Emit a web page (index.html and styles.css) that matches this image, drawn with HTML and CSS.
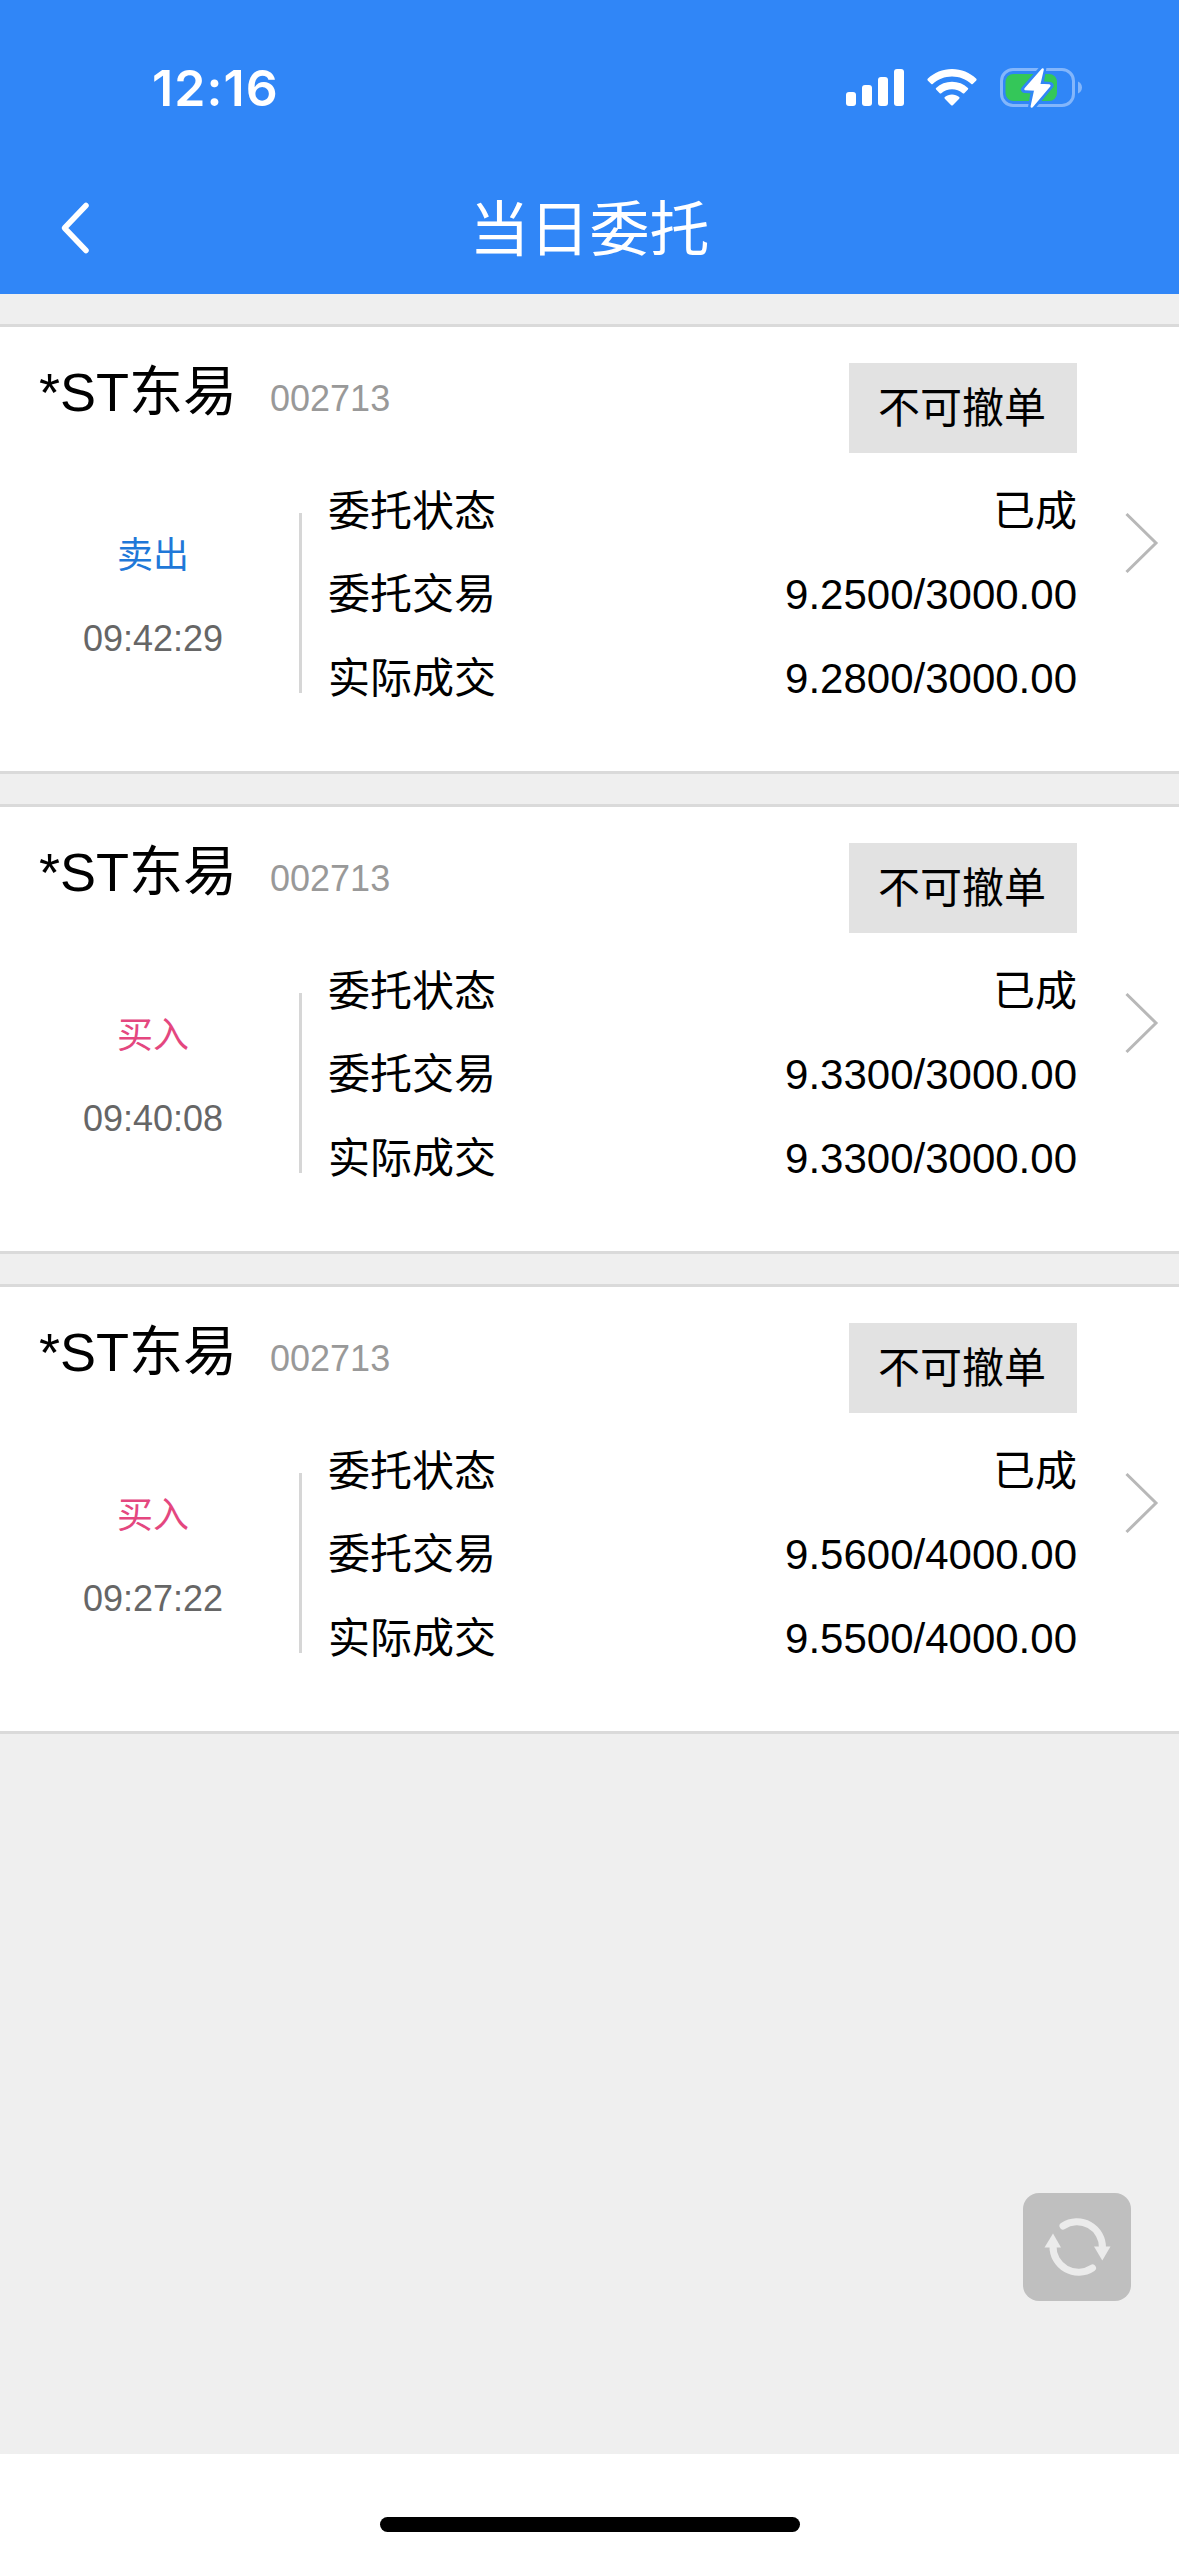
FILE: index.html
```html
<!DOCTYPE html>
<html lang="zh-CN">
<head>
<meta charset="utf-8">
<title>当日委托</title>
<link rel="stylesheet" href="styles.css">
</head>
<body>
<div class="app">
  <header class="top">
    <div class="status">
      <span class="clock">12:16</span>
      <div class="indicators">
        <svg width="58" height="40" viewBox="0 0 58 40" fill="#fff">
          <rect x="0" y="24" width="10" height="14" rx="3"/>
          <rect x="16" y="17" width="10" height="21" rx="3"/>
          <rect x="32" y="9" width="10" height="29" rx="3"/>
          <rect x="48" y="1" width="10" height="37" rx="3"/>
        </svg>
        <svg width="50" height="40" viewBox="0 0 50 40" fill="#fff">
          <path d="M25 1C34.300 1 43 4.600 49.300 10.800Q50 11.600 49.300 12.400L45.700 16Q45 16.600 44.300 16C39 11.200 32.200 8.500 25 8.500S11 11.200 5.700 16Q5 16.600 4.300 16L.7 12.400Q0 11.600.7 10.800C7 4.600 15.700 1 25 1Z"/>
          <path d="M25 13.800C31 13.800 36.600 16 40.900 20Q41.700 20.800 40.900 21.600L37.300 25.200Q36.500 25.900 35.700 25.200C32.700 22.600 29 21.300 25 21.300S17.300 22.600 14.300 25.200Q13.500 25.900 12.700 25.200L9.100 21.600Q8.300 20.800 9.100 20C13.400 16 19 13.800 25 13.800Z"/>
          <path d="M25 26.500C27.700 26.500 30.200 27.400 32.200 29.100Q33 29.900 32.200 30.700L25.800 37.200Q25 38 24.200 37.200L17.800 30.700Q17 29.900 17.800 29.100C19.800 27.400 22.300 26.500 25 26.500Z"/>
        </svg>
        <svg width="82" height="42" viewBox="0 0 82 42">
          <rect x="1.500" y="2.500" width="72" height="36" rx="11.500" fill="none" stroke="#83b6fb" stroke-width="3"/>
          <path d="M78 14.500C80.300 15.500 82 17.800 82 20.500S80.300 25.500 78 26.500Z" fill="#83b6fb"/>
          <rect x="5.500" y="7" width="51.500" height="27" rx="8" fill="#34c759"/>
          <path d="M42.800 1.500 24.500 22.500 34.500 23 31.500 40.500 50 18.500 39.800 17.500Z" fill="#3086f7" stroke="#3086f7" stroke-width="7" stroke-linejoin="round"/>
          <path d="M42.600 2.500 25.500 22 35.500 22.500 31.800 39.500 49.300 18.600 39 18Z" fill="#fff" stroke="#fff" stroke-width="2.500" stroke-linejoin="round"/>
        </svg>
      </div>
    </div>
    <nav class="nav">
      <svg class="back" width="32" height="56" viewBox="0 0 32 56" fill="none" stroke="#fff" stroke-width="5.500" stroke-linecap="round" stroke-linejoin="round"><path d="M26 5.500 4.500 28 26 50.500"/></svg>
      <h1 class="title">当日委托</h1>
    </nav>
  </header>

  <main class="orders">
    <article class="card">
      <div class="head">
        <div class="stock"><span class="name">*ST东易</span><span class="code">002713</span></div>
        <button class="cancel">不可撤单</button>
      </div>
      <div class="body">
        <div class="side"><span class="sell">卖出</span><span class="time">09:42:29</span></div>
        <dl class="rows">
          <div class="row"><dt>委托状态</dt><dd>已成</dd></div>
          <div class="row"><dt>委托交易</dt><dd>9.2500/3000.00</dd></div>
          <div class="row"><dt>实际成交</dt><dd>9.2800/3000.00</dd></div>
        </dl>
        <svg class="more" width="34" height="62" viewBox="0 0 34 62" fill="none" stroke="#b8b8b8" stroke-width="3"><path d="M1.500 2 31 31 1.500 60"/></svg>
      </div>
    </article>

    <article class="card">
      <div class="head">
        <div class="stock"><span class="name">*ST东易</span><span class="code">002713</span></div>
        <button class="cancel">不可撤单</button>
      </div>
      <div class="body">
        <div class="side"><span class="buy">买入</span><span class="time">09:40:08</span></div>
        <dl class="rows">
          <div class="row"><dt>委托状态</dt><dd>已成</dd></div>
          <div class="row"><dt>委托交易</dt><dd>9.3300/3000.00</dd></div>
          <div class="row"><dt>实际成交</dt><dd>9.3300/3000.00</dd></div>
        </dl>
        <svg class="more" width="34" height="62" viewBox="0 0 34 62" fill="none" stroke="#b8b8b8" stroke-width="3"><path d="M1.500 2 31 31 1.500 60"/></svg>
      </div>
    </article>

    <article class="card">
      <div class="head">
        <div class="stock"><span class="name">*ST东易</span><span class="code">002713</span></div>
        <button class="cancel">不可撤单</button>
      </div>
      <div class="body">
        <div class="side"><span class="buy">买入</span><span class="time">09:27:22</span></div>
        <dl class="rows">
          <div class="row"><dt>委托状态</dt><dd>已成</dd></div>
          <div class="row"><dt>委托交易</dt><dd>9.5600/4000.00</dd></div>
          <div class="row"><dt>实际成交</dt><dd>9.5500/4000.00</dd></div>
        </dl>
        <svg class="more" width="34" height="62" viewBox="0 0 34 62" fill="none" stroke="#b8b8b8" stroke-width="3"><path d="M1.500 2 31 31 1.500 60"/></svg>
      </div>
    </article>
  </main>

  <button class="refresh" aria-label="刷新">
    <svg width="108" height="108" viewBox="0 0 108 108">
      <g fill="none" stroke="#ebebeb" stroke-width="7" stroke-linecap="round">
        <path d="M40 33A25.500 25.500 0 0 1 79.500 55"/>
        <path d="M69.500 75A25.500 25.500 0 0 1 30 53"/>
      </g>
      <path d="M71 53.500H87.500L79.300 67.500Z" fill="#ebebeb"/>
      <path d="M21.500 54.500H38L30 40.500Z" fill="#ebebeb"/>
    </svg>
  </button>

  <footer class="bottom"><div class="home-bar"></div></footer>
</div>
</body>
</html>
```
FILE: styles.css
```css
* {
  box-sizing: border-box;
  margin: 0;
  padding: 0;
}

body {
  background: #efefef;
  color: #000;
  font-family: "Liberation Sans", "Noto Sans CJK SC", sans-serif;
}

svg {
  display: block;
}

button {
  border: 0;
  font: inherit;
  color: inherit;
}

.app {
  position: relative;
  display: flex;
  flex-direction: column;
  width: 1179px;
  height: 2556px;
}

.top {
  height: 294px;
  background: #3086f7;
  color: #fff;
}

.status {
  display: flex;
  align-items: center;
  justify-content: space-between;
  height: 162px;
  padding: 14px 97px 0 152px;
}

.clock {
  font: 600 50px/60px Inter, sans-serif;
  letter-spacing: 1.1px;
}

.indicators {
  display: flex;
  align-items: center;
  gap: 23px;
}

.nav {
  display: grid;
  grid-template-columns: 60px 1fr 60px;
  align-items: center;
  height: 132px;
  padding: 0 58px 0 60px;
}

.title {
  padding: 6px 2px 0 0;
  font-size: 60px;
  font-weight: 400;
  line-height: 72px;
  text-align: center;
}

.orders {
  display: flex;
  flex: 1;
  flex-direction: column;
  gap: 30px;
  padding-top: 30px;
}

.card {
  height: 450px;
  padding-top: 36px;
  background: #fff;
  border-top: 3px solid #dadada;
  border-bottom: 3px solid #dadada;
}

.head {
  display: flex;
  justify-content: space-between;
  height: 90px;
  padding: 0 102px 0 39px;
}

.stock {
  display: flex;
  align-items: baseline;
  gap: 33px;
  height: 58px;
}

.name {
  font-size: 54px;
  line-height: 58px;
}

.code {
  color: #999;
  font-size: 36px;
  line-height: 40px;
}

.cancel {
  width: 228px;
  height: 90px;
  padding: 2px 2px 0 0;
  background: #e2e2e2;
  font-size: 42px;
  line-height: 88px;
}

.body {
  display: grid;
  grid-template-columns: 299px 778px 1fr;
  align-items: start;
  padding-top: 16px;
}

.side {
  display: flex;
  flex-direction: column;
  height: 180px;
  margin-top: 44px;
  padding-left: 7px;
  box-shadow: 3px 0 0 #d6d6d6;
  font-size: 36px;
  line-height: 84px;
  text-align: center;
}

.sell,
.buy {
  height: 84px;
  padding-top: 1px;
}

.sell {
  color: #1f78d8;
}

.buy {
  color: #e4477f;
}

.time {
  color: #666;
}

.rows {
  padding-left: 29px;
  font-size: 42px;
  line-height: 84px;
}

.row {
  display: flex;
  justify-content: space-between;
}

.row:first-child {
  height: 84px;
  padding-top: 1px;
}

.more {
  margin: 43px 0 0 48px;
}

.refresh {
  position: absolute;
  right: 48px;
  bottom: 255px;
  width: 108px;
  height: 108px;
  background: #bfbfbf;
  border-radius: 16px;
}

.bottom {
  display: flex;
  justify-content: center;
  height: 102px;
  padding-top: 63px;
  background: #fff;
}

.home-bar {
  width: 420px;
  height: 15px;
  background: #000;
  border-radius: 8px;
}
```
